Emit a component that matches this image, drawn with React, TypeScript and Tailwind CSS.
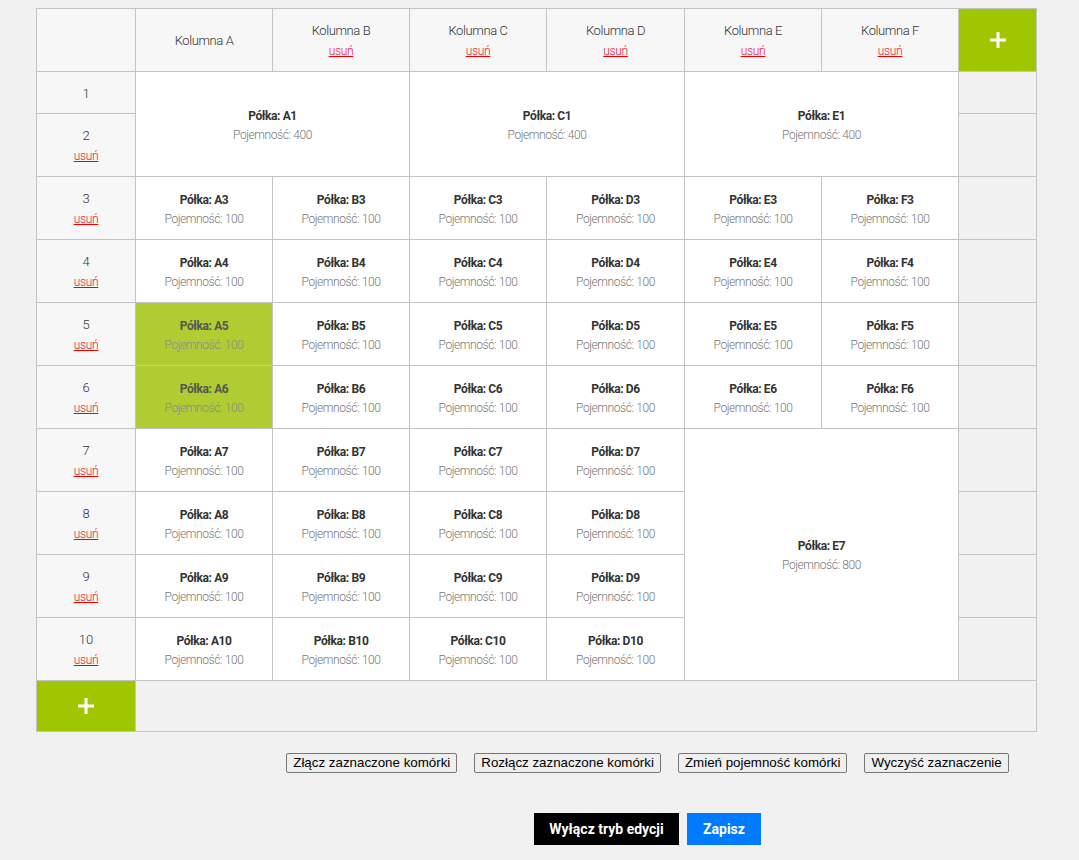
import React from "react";

const cols = ["A", "B", "C", "D", "E", "F"];
const font = { fontFamily: '"Roboto", sans-serif' };

function Usun() {
  return <div className="text-[12px] leading-[16px] tracking-[-0.3px] font-light text-[#e8113a] underline decoration-[#e00] mt-[4px]">usuń</div>;
}

function Cell({ name, cap, selected, rowSpan, colSpan }: { name: string; cap: number; selected?: boolean; rowSpan?: number; colSpan?: number }) {
  return (
    <td
      rowSpan={rowSpan}
      colSpan={colSpan}
      className={`border border-[#c4c4c4] text-center align-middle pt-[2px] ${selected ? "bg-[#afcd32]" : "bg-white"}`}
    >
      <div className={`text-[12px] leading-[16px] tracking-[-0.4px] font-bold ${selected ? "text-[#555]" : "text-[#333]"}`}>Półka: {name}</div>
      <div className={`text-[12px] leading-[16px] tracking-[-0.4px] font-light mt-[3px] ${selected ? "text-[#8a8a8a]" : "text-[#777]"}`}>Pojemność: {cap}</div>
    </td>
  );
}

function RowHead({ n, remove = true }: { n: number; remove?: boolean }) {
  return (
    <td className="border border-[#c4c4c4] bg-[#f7f7f7] text-center align-middle pt-[2px]">
      <div className="text-[13px] leading-[16px] font-light text-[#333]">{n}</div>
      {remove && <Usun />}
    </td>
  );
}

function Extra() {
  return <td className="border border-[#c4c4c4] bg-[#f1f1f1]" />;
}

function Plus() {
  return (
    <svg width="16" height="16" viewBox="0 0 16 16" className="mx-auto block">
      <rect x="6.5" y="0" width="3" height="16" fill="white" />
      <rect x="0" y="6.5" width="16" height="3" fill="white" />
    </svg>
  );
}

export default function App() {
  const simpleRows = [3, 4, 5, 6];
  const lowerRows = [7, 8, 9, 10];
  return (
    <div className="min-h-[860px] bg-[#f1f1f1] pt-[8px]" style={font}>
      <table className="ml-[36px] border-collapse table-fixed w-[1001px]">
        <colgroup>
          <col className="w-[99px]" />
          <col className="w-[137px]" />
          <col className="w-[137px]" />
          <col className="w-[137px]" />
          <col className="w-[138px]" />
          <col className="w-[137px]" />
          <col className="w-[137px]" />
          <col className="w-[78px]" />
        </colgroup>
        <tbody>
          <tr className="h-[63px]">
            <td className="border border-[#c4c4c4] bg-[#f7f7f7]" />
            {cols.map((c, i) => (
              <td key={c} className="border border-[#c4c4c4] bg-[#f7f7f7] text-center align-middle pt-[2px]">
                <div className="text-[13px] leading-[16px] tracking-[-0.4px] font-light text-[#333]">Kolumna {c}</div>
                {i > 0 && <Usun />}
              </td>
            ))}
            <td className="border border-[#c4c4c4] bg-[#a0c600] align-middle">
              <Plus />
            </td>
          </tr>
          <tr className="h-[42px]">
            <RowHead n={1} remove={false} />
            <Cell name="A1" cap={400} rowSpan={2} colSpan={2} />
            <Cell name="C1" cap={400} rowSpan={2} colSpan={2} />
            <Cell name="E1" cap={400} rowSpan={2} colSpan={2} />
            <Extra />
          </tr>
          <tr className="h-[63px]">
            <RowHead n={2} />
            <Extra />
          </tr>
          {simpleRows.map((r) => (
            <tr key={r} className="h-[63px]">
              <RowHead n={r} />
              {cols.map((c) => (
                <Cell key={c} name={`${c}${r}`} cap={100} selected={c === "A" && (r === 5 || r === 6)} />
              ))}
              <Extra />
            </tr>
          ))}
          {lowerRows.map((r, idx) => (
            <tr key={r} className="h-[63px]">
              <RowHead n={r} />
              {["A", "B", "C", "D"].map((c) => (
                <Cell key={c} name={`${c}${r}`} cap={100} />
              ))}
              {idx === 0 && <Cell name="E7" cap={800} rowSpan={4} colSpan={2} />}
              <Extra />
            </tr>
          ))}
          <tr className="h-[51px]">
            <td className="border border-[#c4c4c4] bg-[#a0c600] align-middle">
              <Plus />
            </td>
            <td colSpan={7} className="border border-[#c4c4c4] bg-[#f1f1f1]" />
          </tr>
        </tbody>
      </table>

      <div className="flex justify-center pl-[216px] gap-[17px] mt-[21px]" style={{ fontFamily: '"Liberation Sans", Arial, sans-serif' }}>
        {["Złącz zaznaczone komórki", "Rozłącz zaznaczone komórki", "Zmień pojemność komórki", "Wyczyść zaznaczenie"].map((t) => (
          <button key={t} className="h-[20px] px-[6px] text-[13.33px] leading-[16px] text-black bg-[#efefef] border border-[#767676] rounded-[2px]">
            {t}
          </button>
        ))}
      </div>

      <div className="flex justify-center pl-[216px] gap-[8px] mt-[40px]" style={{ fontFamily: 'Roboto, sans-serif' }}>
        <button className="h-[32px] w-[145px] bg-black text-white font-bold text-[14px]">Wyłącz tryb edycji</button>
        <button className="h-[32px] w-[74px] bg-[#007bff] text-white font-bold text-[14px]">Zapisz</button>
      </div>
    </div>
  );
}
